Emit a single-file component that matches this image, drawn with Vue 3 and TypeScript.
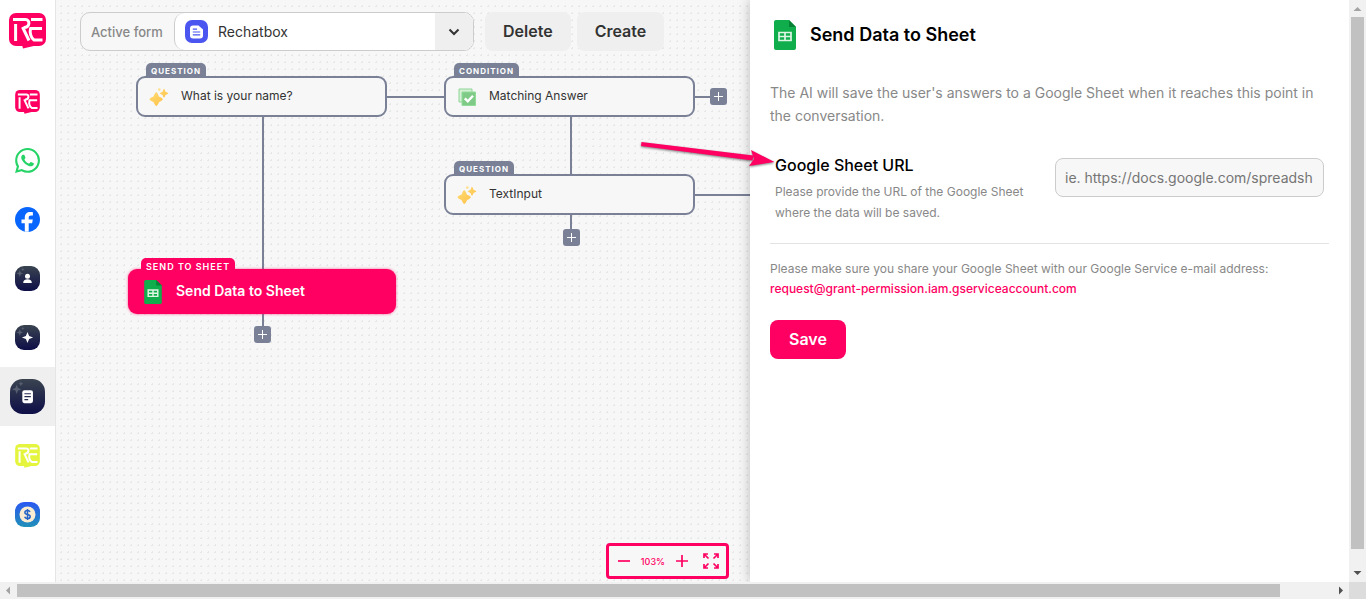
<script setup lang="ts">
import { ref } from 'vue'

type NavKind = 'brand' | 'whatsapp' | 'facebook' | 'person' | 'spark' | 'doc' | 'lime' | 'coin'
interface NavItem { kind: NavKind; label: string; active?: boolean }
interface FlowNode {
  id: string
  tag: string
  title: string
  icon: 'spark' | 'check' | 'sheet'
  x: number
  y: number
  active?: boolean
}
interface Point { x: number; y: number }
interface Line { x: number; y: number; w: number; h: number }

const navItems: NavItem[] = [
  { kind: 'brand', label: 'Home' },
  { kind: 'whatsapp', label: 'WhatsApp' },
  { kind: 'facebook', label: 'Facebook' },
  { kind: 'person', label: 'Personas' },
  { kind: 'spark', label: 'AI' },
  { kind: 'doc', label: 'Forms', active: true },
  { kind: 'lime', label: 'Widgets' },
  { kind: 'coin', label: 'Billing' },
]

const markPath = 'M4 6.6h12.500c5 0 4.500 7.800-1.500 7.800M6.600 11v17M13.500 14l6.500 13.500M22 6.600h11.500M20.500 15.400h12.500M33.500 27h-8.500c-3-2-4.500-7-3.500-11.500'

const nodes: FlowNode[] = [
  { id: 'name', tag: 'QUESTION', title: 'What is your name?', icon: 'spark', x: 80, y: 76 },
  { id: 'match', tag: 'CONDITION', title: 'Matching Answer', icon: 'check', x: 388, y: 76 },
  { id: 'input', tag: 'QUESTION', title: 'TextInput', icon: 'spark', x: 388, y: 174 },
  { id: 'sheet', tag: 'SEND TO SHEET', title: 'Send Data to Sheet', icon: 'sheet', x: 72, y: 269, active: true },
]

const lines: Line[] = [
  { x: 330, y: 96, w: 60, h: 2 },
  { x: 639, y: 96, w: 16, h: 2 },
  { x: 639, y: 194, w: 60, h: 2 },
  { x: 206, y: 116, w: 2, h: 212 },
  { x: 514, y: 116, w: 2, h: 60 },
  { x: 514, y: 213, w: 2, h: 18 },
]

const adders: Point[] = [
  { x: 654, y: 88 },
  { x: 507, y: 229 },
  { x: 198, y: 326 },
]

const activeForm = ref('Rechatbox')
const sheetUrl = ref('')
const zoom = ref(103)
</script>

<template>
  <div class="shell">
    <nav class="sidebar" aria-label="Main">
      <a class="logo" href="#" aria-label="Rechat">
        <svg viewBox="0 0 37 36" width="37" height="36">
          <rect width="37" height="33" rx="7" fill="#ff0062" />
          <path d="M13 32h16l-15 3.500z" fill="#ff0062" />
          <path :d="markPath" fill="none" stroke="#fff" stroke-width="3" />
        </svg>
      </a>
      <div class="nav-list">
        <a v-for="item in navItems" :key="item.kind" href="#" class="nav-item" :class="{ active: item.active }" :aria-label="item.label">
          <svg v-if="item.kind === 'brand' || item.kind === 'lime'" viewBox="0 0 37 36" width="25" height="24">
            <g :fill="item.kind === 'brand' ? '#ff0062' : '#e5f53d'">
              <rect width="37" height="33" rx="7" />
              <path d="M13 32h16l-15 3.500z" />
            </g>
            <path :d="markPath" fill="none" stroke="#fff" stroke-width="3" />
          </svg>
          <svg v-else-if="item.kind === 'whatsapp'" viewBox="0 0 24 24" width="25" height="25">
            <path fill="#25d366" d="M17.472 14.382c-.297-.149-1.758-.867-2.030-.967-.273-.099-.471-.148-.670.150-.197.297-.767.966-.940 1.164-.173.199-.347.223-.644.075-.297-.150-1.255-.463-2.390-1.475-.883-.788-1.480-1.761-1.653-2.059-.173-.297-.018-.458.130-.606.134-.133.298-.347.446-.520.149-.174.198-.298.298-.497.099-.198.050-.371-.025-.520-.075-.149-.669-1.612-.916-2.207-.242-.579-.487-.500-.669-.510-.173-.008-.371-.010-.570-.010-.198 0-.520.074-.792.372-.272.297-1.040 1.016-1.040 2.479 0 1.462 1.065 2.875 1.213 3.074.149.198 2.096 3.200 5.077 4.487.709.306 1.262.489 1.694.625.712.227 1.360.195 1.871.118.571-.085 1.758-.719 2.006-1.413.248-.694.248-1.289.173-1.413-.074-.124-.272-.198-.570-.347m-5.421 7.403h-.004a9.870 9.870 0 0 1-5.031-1.378l-.361-.214-3.741.982.998-3.648-.235-.374a9.860 9.860 0 0 1-1.510-5.260c.001-5.450 4.436-9.884 9.888-9.884 2.640 0 5.122 1.030 6.988 2.898a9.825 9.825 0 0 1 2.893 6.994c-.003 5.450-4.437 9.884-9.885 9.884m8.413-18.297A11.815 11.815 0 0 0 12.050 0C5.495 0 .160 5.335.157 11.892c0 2.096.547 4.142 1.588 5.945L.057 24l6.305-1.654a11.882 11.882 0 0 0 5.683 1.448h.005c6.554 0 11.890-5.335 11.893-11.893a11.821 11.821 0 0 0-3.480-8.413z" />
          </svg>
          <svg v-else-if="item.kind === 'facebook'" viewBox="0 0 25 25" width="25" height="25">
            <circle cx="12.500" cy="12.500" r="12.500" fill="#0866ff" />
            <path fill="#fff" d="M9.800 24.800v-8.500H6.500v-3.700h3.300v-1.900c0-4 2-5.800 5.600-5.800.9 0 1.900.1 2.500.3v3.300h-1.800c-1.700 0-2.400.8-2.400 2.300v1.800h4.100l-.7 3.700h-3.400v8.500z" />
          </svg>
          <svg v-else-if="item.kind === 'coin'" viewBox="0 0 25 25" width="25" height="25">
            <defs><linearGradient id="coin" x2="0" y2="1"><stop stop-color="#2b58f2" /><stop offset="1" stop-color="#2090b8" /></linearGradient></defs>
            <rect width="25" height="25" rx="9" fill="url(#coin)" />
            <circle cx="12.500" cy="12.500" r="8" fill="#f9ecd2" />
            <path d="M15 10c-.5-1.200-1.400-1.600-2.500-1.600-1.500 0-2.600.8-2.600 2 0 2.800 5.300 1.300 5.300 4.100 0 1.300-1.200 2.100-2.700 2.100-1.400 0-2.400-.6-2.800-1.900M12.500 7v11" fill="none" stroke="#2463c8" stroke-width="1.500" />
          </svg>
          <svg v-else viewBox="0 0 25 25" :width="item.active ? 35 : 25" :height="item.active ? 35 : 25">
            <defs><linearGradient :id="'g-' + item.kind" x2="0" y2="1"><stop stop-color="#3a4450" /><stop offset="1" stop-color="#0d0e47" /></linearGradient></defs>
            <rect width="25" height="25" rx="9" :fill="'url(#g-' + item.kind + ')'" />
            <path d="M4.800 4l.9 2.500 2.500.9-2.500.9-.9 2.500-.9-2.500-2.500-.9 2.500-.9zM7.800 1.700l.5 1.200 1.200.5-1.200.5-.5 1.200-.5-1.200-1.200-.5 1.200-.5z" fill="#687080" opacity=".7" />
            <g v-if="item.kind === 'person'" fill="#fff">
              <circle cx="12.500" cy="10.200" r="2.500" />
              <path d="M8.200 17c0-2.600 1.600-3.800 4.300-3.800s4.300 1.200 4.300 3.800z" />
            </g>
            <path v-else-if="item.kind === 'spark'" fill="#fff" d="M12.500 7l1.600 4 4 1.500-4 1.500-1.600 4-1.600-4-4-1.500 4-1.500z" />
            <g v-else>
              <rect x="8.800" y="8" width="7.600" height="9.300" rx="1.500" fill="#fff" />
              <path d="M10.300 10.500h4.600M10.300 12.600h4.600M10.300 14.700h2.700" stroke="#262b50" stroke-width=".8" />
            </g>
          </svg>
        </a>
      </div>
    </nav>

    <main class="canvas">
      <div class="flow">
        <span v-for="(l, i) in lines" :key="'l' + i" class="line" :style="{ left: l.x + 'px', top: l.y + 'px', width: l.w + 'px', height: l.h + 'px' }"></span>
        <article v-for="n in nodes" :key="n.id" class="node" :class="{ selected: n.active }" :style="{ left: n.x + 'px', top: n.y + 'px' }">
          <span class="tag">{{ n.tag }}</span>
          <svg v-if="n.icon === 'spark'" class="node-icon" viewBox="0 0 20 20" width="20" height="20">
            <defs><linearGradient :id="'gold-' + n.id" x2="1" y2="1"><stop stop-color="#ffdf75" /><stop offset="1" stop-color="#ffbd45" /></linearGradient></defs>
            <path :fill="'url(#gold-' + n.id + ')'" d="M7.300 5.300Q8.300 5.300 9.800 9.500 13.800 11.200 13.800 12.200 13.800 13.300 10.200 15 8.300 19 7.300 19 6.200 19 4.500 15 .5 13.300.5 12.200.5 11.200 4.600 9.500 6.200 5.300 7.300 5.300zM15 1.800Q15.600 1.800 16.500 4.700 19.400 5.700 19.400 6.300 19.400 7 16.500 8 15.600 10.800 15 10.800 14.400 10.800 13.500 8 10.800 7 10.800 6.300 10.800 5.700 13.500 4.700 14.400 1.800 15 1.800z" />
            <circle cx="10.300" cy="2.600" r="1.300" fill="#ffdf8a" />
          </svg>
          <svg v-else-if="n.icon === 'check'" class="node-icon" viewBox="0 0 20 20" width="20" height="20">
            <path d="M2 2h13v13H2z" fill="#d5f0d5" stroke="#8fd597" />
            <path d="M5 5h13.500v13.500H5z" fill="#7fca86" stroke="#91dc98" />
            <path d="M7.800 11.300l3 3 5.200-5.500" fill="none" stroke="#fff" stroke-width="2.400" />
          </svg>
          <svg v-else class="node-icon" viewBox="0 0 22 30" width="20" height="24">
            <path fill="#0fad4b" d="M2 0H15l7 7v21a2 2 0 0 1-2 2H2a2 2 0 0 1-2-2V2a2 2 0 0 1 2-2z" />
            <path fill="#078235" d="M15 0l7 7h-7z" />
            <path d="M5 12.500h12v8H5zM11 12.500v8M5 16.500h12" fill="none" stroke="#dff5e6" stroke-width="1.800" />
          </svg>
          <span class="node-title">{{ n.title }}</span>
        </article>
        <button v-for="(a, i) in adders" :key="'a' + i" class="adder" type="button" aria-label="Add step" :style="{ left: a.x + 'px', top: a.y + 'px' }">
          <svg viewBox="0 0 17 17" width="17" height="17"><path d="M8.500 4v9M4 8.500h9" stroke="#fff" /></svg>
        </button>
      </div>

      <header class="toolbar">
        <div class="form-picker">
          <label for="active-form">Active form</label>
          <div class="picker-box">
            <svg viewBox="0 0 23 23" width="23" height="23">
              <rect width="23" height="23" rx="7" fill="#4b56f0" />
              <path d="M8 5.500h5.500l4.500 4V15.500a3 3 0 0 1-3 3H8a3 3 0 0 1-3-3v-7a3 3 0 0 1 3-3z" fill="#fff" />
              <path d="M7.800 9.200h4.200M7.800 12h7.400M7.800 14.800h7.400" stroke="#4b56f0" stroke-width="1.200" />
            </svg>
            <select id="active-form" v-model="activeForm">
              <option>Rechatbox</option>
            </select>
            <span class="chevron">
              <svg viewBox="0 0 12 8" width="12" height="8"><path d="M1.500 1.500L6 6l4.500-4.500" fill="none" stroke="#333" stroke-width="2" /></svg>
            </span>
          </div>
        </div>
        <div class="actions">
          <button class="soft" type="button">Delete</button>
          <button class="soft" type="button">Create</button>
        </div>
      </header>

      <div class="zoom-bar">
        <button type="button" aria-label="Zoom out" @click="zoom--">
          <svg viewBox="0 0 12 12" width="12" height="12"><path d="M0 6h12" stroke="#ff0062" stroke-width="1.700" /></svg>
        </button>
        <output>{{ zoom }}%</output>
        <button type="button" aria-label="Zoom in" @click="zoom++">
          <svg viewBox="0 0 12 12" width="12" height="12"><path d="M0 6h12M6 0v12" stroke="#ff0062" stroke-width="1.700" /></svg>
        </button>
        <button class="fit" type="button" aria-label="Fit to screen">
          <svg viewBox="0 0 16 16" width="16" height="16">
            <path d="M1 5V1h4M11 1h4v4M15 11v4h-4M5 15H1v-4M1.500 1.500L5.500 5.500M14.500 1.500l-4 4M14.500 14.500l-4-4M1.500 14.500l4-4" fill="none" stroke="#ff0062" stroke-width="1.700" />
          </svg>
        </button>
      </div>
    </main>

    <aside class="panel">
      <svg class="pointer" viewBox="0 0 140 36" width="140" height="36" aria-hidden="true">
        <g class="pointer-shape" fill="#ff0062">
          <path d="M4.500 6l112 13.600-1 5L4 10z" />
          <path d="M114 14l23.500 12-25.500 4 5-7z" />
        </g>
      </svg>
      <h1>
        <svg viewBox="0 0 22 30" width="22" height="30">
          <path fill="#0fad4b" d="M2 0H15l7 7v21a2 2 0 0 1-2 2H2a2 2 0 0 1-2-2V2a2 2 0 0 1 2-2z" />
          <path fill="#078235" d="M15 0l7 7h-7z" />
          <path d="M5 12.500h12v8H5zM11 12.500v8M5 16.500h12" fill="none" stroke="#dff5e6" stroke-width="1.700" />
        </svg>
        Send Data to Sheet
      </h1>
      <p class="intro">The AI will save the user's answers to a Google Sheet when it reaches this point in the conversation.</p>
      <form @submit.prevent>
        <div class="field">
          <div class="field-text">
            <label for="sheet-url">Google Sheet URL</label>
            <p id="sheet-help">Please provide the URL of the Google Sheet where the data will be saved.</p>
          </div>
          <input id="sheet-url" v-model="sheetUrl" type="text" aria-describedby="sheet-help" placeholder="ie. https://docs.google.com/spreadsh" />
        </div>
        <p class="note">
          Please make sure you share your Google Sheet with our Google Service e-mail address:<br />
          <a href="mailto:request@grant-permission.iam.gserviceaccount.com">request@grant-permission.iam.gserviceaccount.com</a>
        </p>
        <button class="save" type="submit">Save</button>
      </form>
    </aside>

    <div class="vbar" aria-hidden="true">
      <svg viewBox="0 0 17 17" width="17" height="17"><path d="M8.500 7l4 4h-8z" fill="#a3a3a3" /></svg>
      <span class="thumb"></span>
      <svg viewBox="0 0 17 17" width="17" height="17"><path d="M4.500 6h8l-4 4z" fill="#505050" /></svg>
    </div>
    <div class="hbar" aria-hidden="true">
      <svg viewBox="0 0 17 17" width="17" height="17"><path d="M6 8.500l4-4v8z" fill="#a3a3a3" /></svg>
      <span class="thumb"></span>
      <svg viewBox="0 0 17 17" width="17" height="17"><path d="M11 8.500l-4-4v8z" fill="#505050" /></svg>
    </div>
    <div class="corner"></div>
  </div>
</template>

<style>
body { margin: 0; overflow: hidden; }
</style>

<style scoped>
* { box-sizing: border-box; }
.shell {
  display: grid;
  grid-template-columns: 56px minmax(0, 694fr) minmax(0, 599fr) 17px;
  grid-template-rows: minmax(0, 1fr) 17px;
  height: 100vh;
  font-family: Inter, "Liberation Sans", sans-serif;
  color: #333;
  background: #fff;
}
button, input, select { font-family: inherit; border: 0; margin: 0; }
button { cursor: pointer; padding: 0; }
svg { display: block; flex: none; }

.sidebar { background: #fff; border-right: 1px solid #e5e5e5; overflow: hidden; }
.logo { display: flex; justify-content: center; padding: 13px 0; height: 62px; }
.nav-list { padding-top: 10px; }
.nav-item { display: flex; align-items: center; justify-content: center; height: 59px; }
.nav-item.active { background: #efefef; }

.canvas {
  position: relative;
  display: flex;
  flex-direction: column;
  justify-content: space-between;
  overflow: hidden;
  background: #f7f7f7 radial-gradient(circle, #e7e7e7 1px, transparent 1px) 2px 3px / 7px 7px;
}
.flow { position: absolute; inset: 0; }
.line { position: absolute; background: #7a8197; }
.node {
  position: absolute;
  display: flex;
  align-items: center;
  gap: 12px;
  width: 251px;
  height: 41px;
  padding: 0 11px;
  border: 2px solid #7a8197;
  border-radius: 9px;
  background: #f7f7f7;
  font-size: 12px;
}
.node-title { padding-bottom: 2px; }
.tag {
  position: absolute;
  left: 8px;
  bottom: 100%;
  height: 15px;
  padding: 0 5px;
  border-radius: 5px 5px 0 0;
  background: #7a8197;
  color: #fff;
  font-size: 8px;
  font-weight: 700;
  line-height: 17px;
  letter-spacing: 1px;
  white-space: nowrap;
}
.node.selected {
  gap: 13px;
  width: 268px;
  height: 45px;
  padding: 0 15px;
  border: 0;
  background: #ff0062;
  color: #fff;
  font-size: 14px;
  font-weight: 600;
  box-shadow: 0 0 3px rgba(255, 0, 98, 0.6);
}
.selected .tag { left: 13px; height: 11px; background: #ff0062; font-size: 9px; font-weight: 600; }
.adder {
  position: absolute;
  width: 17px;
  height: 17px;
  border-radius: 3px;
  background: #7a8197;
}

.toolbar { position: relative; display: flex; gap: 11px; padding: 12px 24px; }
.form-picker {
  display: flex;
  width: 394px;
  height: 39px;
  border: 1px solid #ccc;
  border-radius: 10px;
  background: #f7f7f7;
  overflow: hidden;
}
.form-picker label { flex: none; width: 93px; padding-left: 10px; font-size: 13px; font-weight: 500; line-height: 39px; color: #888; }
.picker-box {
  display: flex;
  flex: 1;
  align-items: center;
  min-width: 0;
  padding-left: 10px;
  border-left: 1px solid #ccc;
  border-radius: 10px 0 0 10px;
  background: #fff;
}
.picker-box select {
  flex: 1;
  min-width: 0;
  height: 37px;
  padding: 0 10px;
  appearance: none;
  background: transparent;
  color: #333;
  font-size: 14px;
}
.chevron { display: flex; align-items: center; justify-content: center; width: 38px; height: 37px; background: #efefef; }
.actions { display: flex; gap: 6px; }
.soft { height: 39px; padding: 0 18px 2px; border-radius: 8px; background: #efefef; color: #333; font-size: 16px; font-weight: 600; }

.zoom-bar {
  position: relative;
  display: flex;
  align-items: center;
  align-self: flex-end;
  gap: 11px;
  height: 36px;
  margin: 0 21px 3px 0;
  padding: 0 7px 0 9px;
  border: 3px solid #ff0062;
  border-radius: 4px;
  background: #f7f7f7;
  color: #ff0062;
  font-size: 9px;
  font-weight: 500;
}
.zoom-bar button { background: transparent; }
.zoom-bar .fit { margin-left: 4px; }

.panel {
  position: relative;
  padding: 20px;
  background: #fff;
  box-shadow: 0 0 12px rgba(0, 0, 0, 0.25);
  clip-path: inset(0 0 0 -120px);
}
.pointer { position: absolute; left: -113px; top: 136px; }
.pointer-shape { filter: drop-shadow(0 1px 1px rgba(0, 0, 0, 0.5)); }
h1 {
  display: flex;
  align-items: center;
  gap: 14px;
  margin: 0;
  padding-left: 4px;
  color: #000;
  font-size: 18px;
  font-weight: 600;
  line-height: 30px;
}
p { margin: 0; color: #888; }
.intro { margin-top: 31px; font-size: 14px; line-height: 23px; }
.field {
  display: flex;
  justify-content: space-between;
  gap: 20px;
  margin-top: 26px;
  padding: 0 5px 20px;
  border-bottom: 1px solid #e3e3e3;
}
.field-text { flex: 1; min-width: 0; }
.field-text label { display: block; color: #000; font-size: 16px; font-weight: 500; line-height: 24px; }
.field-text p { margin-top: 4px; font-size: 12px; line-height: 21px; }
.field input {
  width: 269px;
  height: 39px;
  margin-top: 5px;
  padding: 0 9px;
  border: 1px solid #ccc;
  border-radius: 8px;
  background: #f7f7f7;
  color: #333;
  font-size: 14px;
}
.field input::placeholder { color: #757575; }
.note { margin-top: 15px; font-size: 12px; line-height: 20px; }
.note a { color: #ff0062; font-weight: 500; text-decoration: none; }
.save {
  height: 39px;
  margin-top: 21px;
  padding: 0 19px 2px;
  border-radius: 8px;
  background: #ff0062;
  color: #fff;
  font-size: 16px;
  font-weight: 600;
}

.vbar, .hbar { display: flex; background: #f1f1f1; }
.vbar { flex-direction: column; align-items: center; }
.vbar .thumb { flex: none; width: 13px; height: 91.4%; margin-bottom: auto; background: #c1c1c1; }
.hbar { grid-column: 1 / 4; align-items: center; }
.hbar .thumb { flex: none; width: 93.6%; height: 13px; margin-right: auto; background: #c1c1c1; }
.corner { background: #dcdcdc; }
</style>
